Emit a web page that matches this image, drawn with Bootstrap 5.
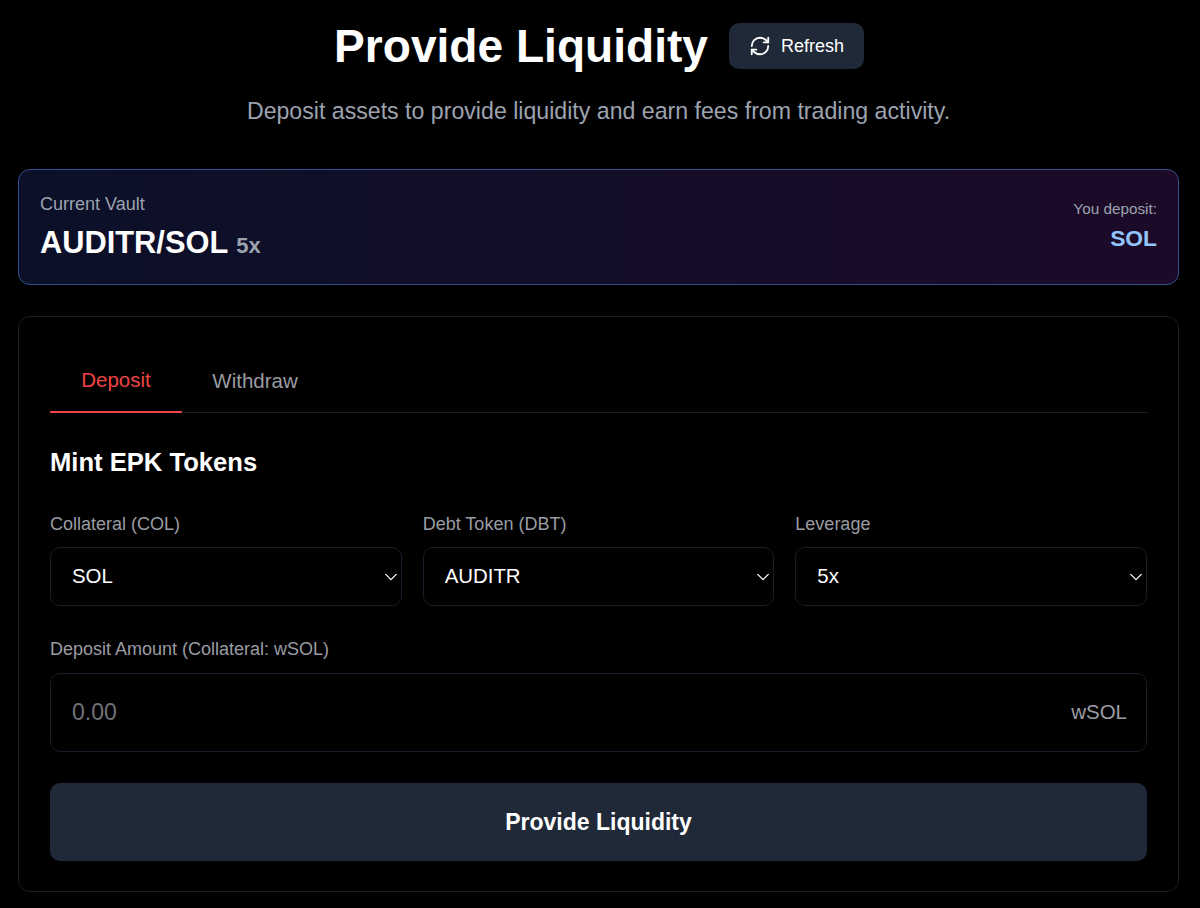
<!DOCTYPE html>
<html lang="en">
<head>
<meta charset="utf-8">
<title>Provide Liquidity</title>
<link href="https://cdn.jsdelivr.net/npm/bootstrap@5.3.0/dist/css/bootstrap.min.css" rel="stylesheet">
<style>
html,body{background:#000;height:100%;}
body{font-family:"Liberation Sans",Arial,sans-serif;color:#fff;overflow:hidden;}
.page-wrap{padding:0 21px 0 18px;}
.head-row{height:92px;gap:21px;padding-left:1px;}
.page-title{font-size:46.1px;font-weight:700;line-height:1;margin:0;}
.refresh-btn{background:#1f2937;color:#fff;border:0;border-radius:10px;width:135px;height:46px;font-size:18px;gap:10px;}
.refresh-btn:hover{background:#1f2937;color:#fff;}
.page-sub{font-size:23.15px;color:#9ca3af;line-height:28px;height:77px;padding-top:5px;margin:0;text-align:center;}
.vault-box{height:116px;border:1px solid #34508f;border-radius:12px;background:linear-gradient(90deg,#0b1028,#1c0a28);padding:2px 21px 0;}
.vault-label{font-size:18px;color:#9ca3af;line-height:22px;}
.vault-pair{font-size:30.8px;font-weight:700;line-height:36px;margin-top:10px;}
.vault-lev{font-size:22px;color:#9ca3af;}
.dep-box{padding-bottom:6px;}
.dep-label{font-size:15.3px;color:#9ca3af;line-height:20px;}
.dep-token{font-size:22.8px;font-weight:700;color:#93c5fd;line-height:28px;margin-top:5px;}
.main-box{margin-top:31px;height:576px;border:1px solid #181c2b;border-radius:12px;padding:32px 31px;}
.tab-row{height:64px;border-bottom:1px solid #181c2b;}
.tab-item{width:132px;height:64px;font-size:20.5px;color:#9a9ca3;line-height:58px;text-align:center;background:none;border:0;padding:0;}
.tab-item.is-on{color:#ef4444;border-bottom:2px solid #ef4444;}
.tab-item.is-off{width:146px;}
.form-title{font-size:25.6px;font-weight:700;line-height:32px;margin:33px 0 34px;}
.f-label{font-size:18px;color:#9a9ca3;line-height:24px;margin-bottom:11px;display:block;}
.amt-label{margin-bottom:12px;}
.sel-row{gap:21px;}
.sel-field{flex:1 1 0;min-width:0;}
.form-select.dark-sel{height:59px;background-color:#000;color:#fff;border:1px solid #181c2b;border-radius:10px;font-size:20.4px;padding:0 21px;background-position:right 3px center;background-size:14px 14px;background-image:url("data:image/svg+xml,%3csvg xmlns='http://www.w3.org/2000/svg' viewBox='0 0 16 16'%3e%3cpath fill='none' stroke='%23ffffff' stroke-linecap='round' stroke-linejoin='round' stroke-width='1.5' d='m2 5 6 6 6-6'/%3e%3c/svg%3e");}
.amt-block{margin-top:31px;}
.amt-wrap{height:79px;border:1px solid #181c2b;border-radius:10px;padding:0 19px 0 21px;}
.amt-input{background:transparent;border:0;outline:0;color:#fff;font-size:23px;flex:1;min-width:0;padding:0;}
.amt-input::placeholder{color:#717379;opacity:1;}
.amt-unit{font-size:20.5px;color:#9a9ca3;}
.submit-btn{margin-top:31px;height:78px;width:100%;background:#1f2937;color:#fff;border:0;border-radius:10px;font-size:23px;font-weight:700;}
.submit-btn:hover{background:#1f2937;color:#fff;}
</style>
</head>
<body>
<div class="page-wrap">
  <div class="head-row d-flex align-items-center justify-content-center">
    <h1 class="page-title">Provide Liquidity</h1>
    <button class="btn refresh-btn d-inline-flex align-items-center justify-content-center p-0">
      <svg width="22" height="22" viewBox="0 0 24 24" fill="none" stroke="#fff" stroke-width="2" stroke-linecap="round" stroke-linejoin="round"><path d="M3 12a9 9 0 0 1 9-9 9.750 9.750 0 0 1 6.740 2.740L21 8"/><path d="M21 3v5h-5"/><path d="M21 12a9 9 0 0 1-9 9 9.750 9.750 0 0 1-6.740-2.740L3 16"/><path d="M8 16H3v5"/></svg>
      <span>Refresh</span>
    </button>
  </div>
  <p class="page-sub">Deposit assets to provide liquidity and earn fees from trading activity.</p>

  <div class="vault-box d-flex align-items-center justify-content-between">
    <div>
      <div class="vault-label">Current Vault</div>
      <div class="vault-pair">AUDITR/SOL <span class="vault-lev">5x</span></div>
    </div>
    <div class="text-end dep-box">
      <div class="dep-label">You deposit:</div>
      <div class="dep-token">SOL</div>
    </div>
  </div>

  <div class="main-box">
    <div class="tab-row d-flex">
      <button class="tab-item is-on">Deposit</button>
      <button class="tab-item is-off">Withdraw</button>
    </div>
    <h2 class="form-title">Mint EPK Tokens</h2>
    <div class="d-flex sel-row">
      <div class="sel-field">
        <label class="f-label">Collateral (COL)</label>
        <select class="form-select dark-sel"><option>SOL</option></select>
      </div>
      <div class="sel-field">
        <label class="f-label">Debt Token (DBT)</label>
        <select class="form-select dark-sel"><option>AUDITR</option></select>
      </div>
      <div class="sel-field">
        <label class="f-label">Leverage</label>
        <select class="form-select dark-sel"><option>5x</option></select>
      </div>
    </div>
    <div class="amt-block">
      <label class="f-label amt-label">Deposit Amount (Collateral: wSOL)</label>
      <div class="amt-wrap d-flex align-items-center">
        <input class="amt-input" placeholder="0.00">
        <span class="amt-unit">wSOL</span>
      </div>
    </div>
    <button class="btn submit-btn">Provide Liquidity</button>
  </div>
</div>
</body>
</html>
